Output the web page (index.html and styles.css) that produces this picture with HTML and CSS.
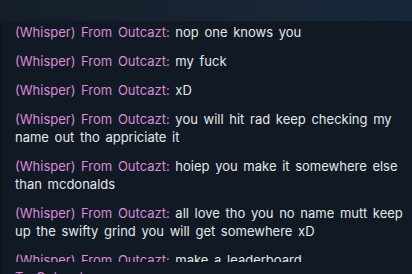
FILE: index.html
```html
<!DOCTYPE html>
<html>
<head>
    <title>Chat</title>
    <link rel="stylesheet" href="styles.css">
</head>
<body>
    <div class="top-bar"></div>
    <div class="chat-panel">
        <div class="chat-log">
            <div class="msg"><span class="from">(Whisper) From Outcazt:</span> nop one knows you</div>
            <div class="msg"><span class="from">(Whisper) From Outcazt:</span> my fuck</div>
            <div class="msg"><span class="from">(Whisper) From Outcazt:</span> xD</div>
            <div class="msg"><span class="from">(Whisper) From Outcazt:</span> you will hit rad keep checking my name out tho appriciate it</div>
            <div class="msg"><span class="from">(Whisper) From Outcazt:</span> hoiep you make it somewhere else than mcdonalds</div>
            <div class="msg"><span class="from">(Whisper) From Outcazt:</span> all love tho you no name mutt keep up the swifty grind you will get somewhere xD</div>
            <div class="msg"><span class="from">(Whisper) From Outcazt:</span> make a leaderboard</div>
        </div>
        <div class="chat-input"><span class="from">To Outcazt:</span></div>
    </div>
</body>
</html>
```

FILE: styles.css
```css
body {
    margin: 0;
    background-color: #111a24;
    font-family: Inter, "Noto Sans", sans-serif;
    font-size: 13px;
    word-spacing: 2px;
    color: #e4e6e8;
    overflow: hidden;
}

.top-bar {
    height: 21px;
    background: linear-gradient(90deg, #161f29 0%, #18283a 100%);
}

.chat-panel {
    border-left: 2px solid #0d141b;
    background-color: #111a24;
}

.chat-log {
    height: 239px;
    padding: 2px 2px 0 13px;
    overflow: hidden;
}

.msg {
    line-height: 18px;
    margin-bottom: 11px;
}

.from {
    color: #d98bd8;
}

.chat-input {
    padding: 6px 2px 0 13px;
    line-height: 18px;
}
```
